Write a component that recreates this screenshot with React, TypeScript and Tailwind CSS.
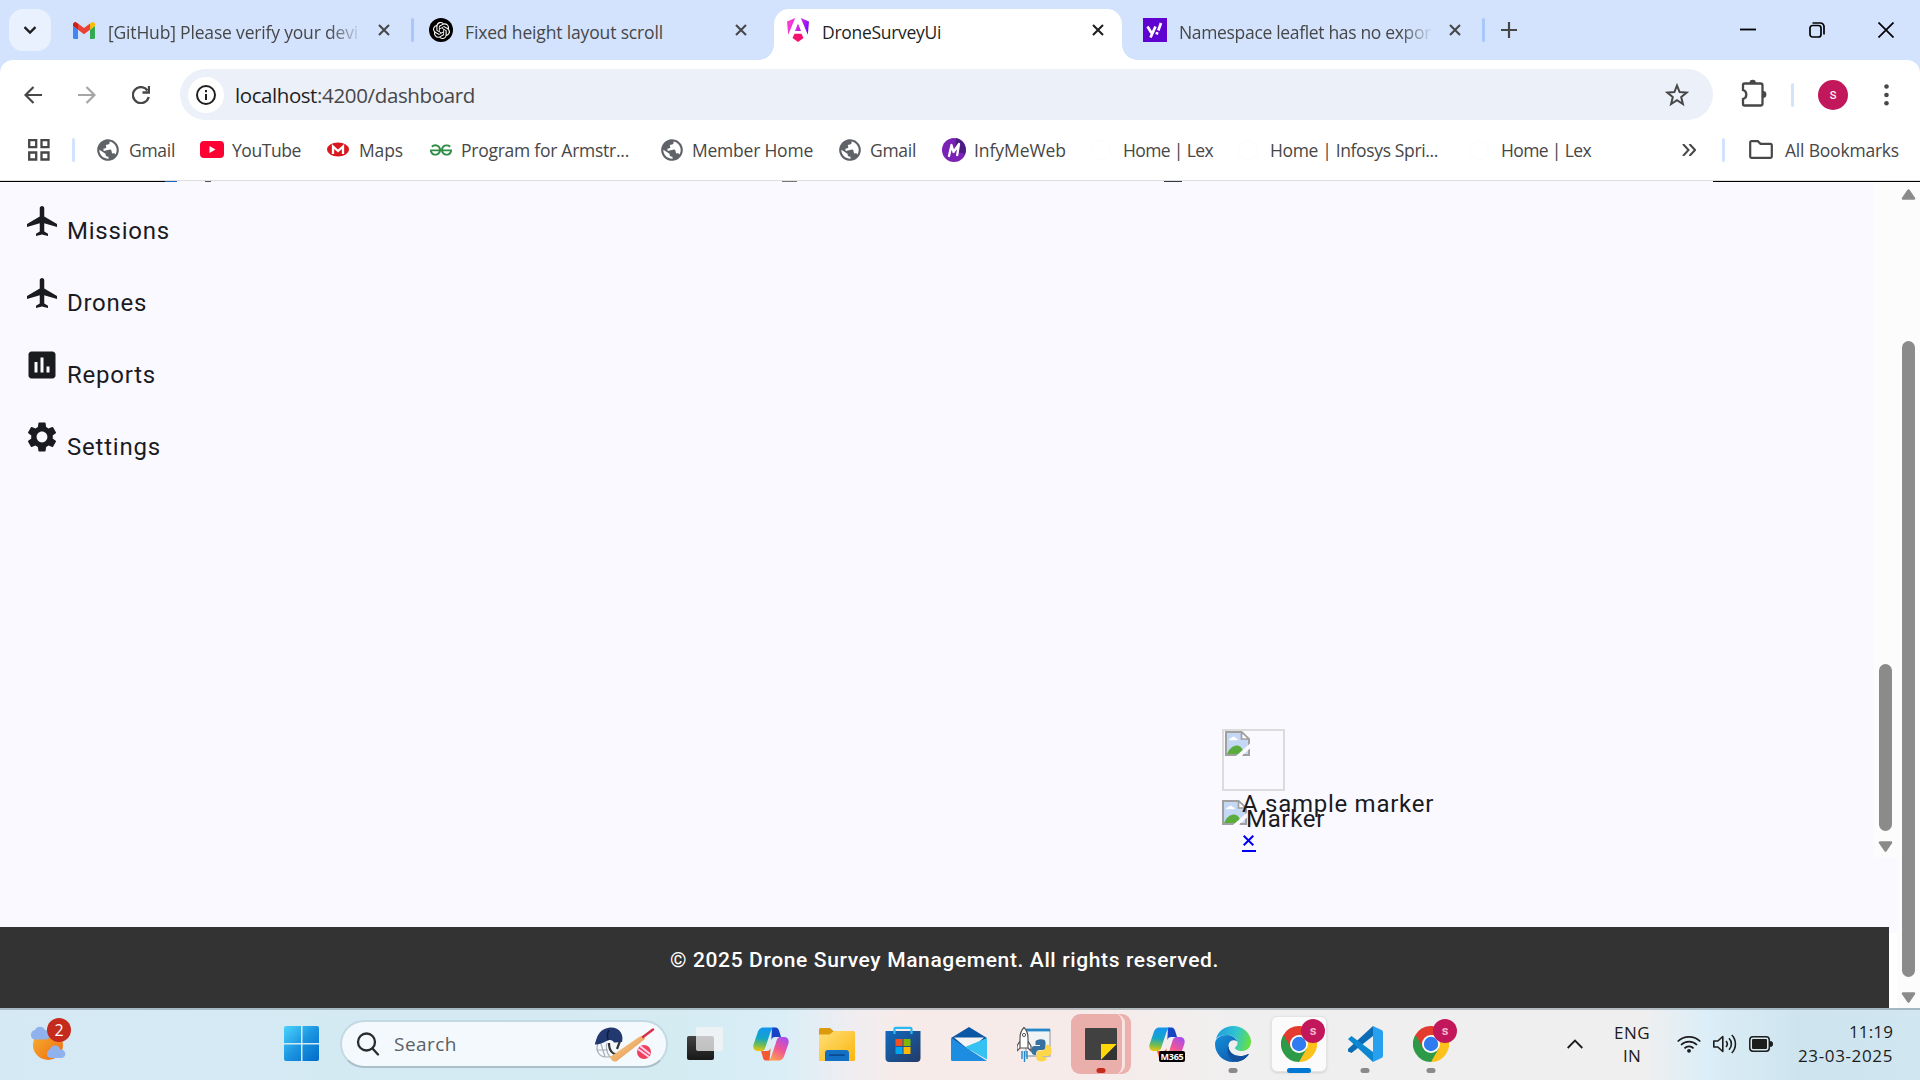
import React, { useLayoutEffect, useRef, useState } from "react";
import { MdPublic, MdAirplanemodeActive, MdSettings, MdAssessment } from "react-icons/md";
import { SiOpenai, SiGeeksforgeeks } from "react-icons/si";

type FitProps = { w: number; className?: string; children: string };

/* Single line of text whose tracking is adjusted so that it spans `w` pixels. */
function Fit({ w, className = "", children }: FitProps) {
  const ref = useRef<HTMLSpanElement>(null);
  const [spacing, setSpacing] = useState(0);
  useLayoutEffect(() => {
    if (ref.current) {
      const natural = ref.current.getBoundingClientRect().width;
      setSpacing((w - natural) / children.length);
    }
  }, [w, children]);
  return (
    <span ref={ref} className={"shrink-0 whitespace-pre " + className} style={{ letterSpacing: spacing + "px" }}>
      {children}
    </span>
  );
}

function Cross({ className = "" }: { className?: string }) {
  return (
    <svg className={"h-3 w-3 shrink-0 " + className} viewBox="0 0 12 12" stroke="currentColor" strokeWidth="2.1" fill="none">
      <path d="M1 1l10 10M11 1L1 11" />
    </svg>
  );
}

function GmailIcon() {
  return (
    <svg className="h-[17px] w-[22px] shrink-0" viewBox="0 0 22 17">
      <path fill="#4285f4" d="M0 4l5 3.7V17H1.5A1.5 1.5 0 0 1 0 15.500z" />
      <path fill="#34a853" d="M22 4l-5 3.700V17h3.500a1.500 1.500 0 0 0 1.500-1.500z" />
      <path fill="#ea4335" d="M5 1.600l6 4.500 6-4.500v6.200l-6 4.500-6-4.500z" />
      <path fill="#c5221f" d="M0 2.500C0 .3 2.400-.8 4.100.900L5 1.600v6.200L0 4z" />
      <path fill="#fbbc04" d="M22 2.500C22 .3 19.600-.8 17.900.900L17 1.600v6.200L22 4z" />
    </svg>
  );
}

function AngularIcon() {
  return (
    <svg className="h-6 w-6 shrink-0" viewBox="0 0 24 24">
      <defs>
        <linearGradient id="ng" x1="0" y1="0.2" x2="1" y2="0.5">
          <stop offset="0" stopColor="#ff41d0" />
          <stop offset="0.5" stopColor="#e02be0" />
          <stop offset="1" stopColor="#7a0cf8" />
        </linearGradient>
      </defs>
      <path fill="url(#ng)" d="M9.200 0L1 3.500l1.200 13.200zM14.800 0L23 3.500l-1.200 13.200zM12 5.500l3 7.500H9z" />
      <path fill="#f6116e" d="M7.500 18l1-2.200h7l1 2.200 1 2L12 24l-5.500-4z" />
    </svg>
  );
}

function TabStrip() {
  const label = "font-['Open_Sans'] text-[17.5px] leading-6 pt-[3px]";
  return (
    <div className="flex h-[60px] shrink-0 items-center bg-[#d3e3fd] text-[#474747]">
      <div className="ml-[9px] flex h-[42px] w-[42px] items-center justify-center rounded-[14px] bg-[#e9f1fe] text-[#1f1f1f]">
        <svg className="h-3 w-3" viewBox="0 0 12 12" fill="none" stroke="currentColor" strokeWidth="2.4"><path d="M.5 3L6 8.500 11.500 3" /></svg>
      </div>
      <div className="ml-[22px] flex w-[338px] items-center">
        <GmailIcon />
        <div className="ml-[13px] flex w-[252px] overflow-hidden [mask-image:linear-gradient(to_right,black_88%,transparent_101%)]">
          <Fit w={250} className={label}>[GitHub] Please verify your devi</Fit>
        </div>
        <Cross className="ml-[18px]" />
      </div>
      <div className="h-6 w-[3px] rounded-full bg-[#a8c7fa]" />
      <div className="ml-[15px] flex w-[345px] items-center">
        <div className="flex h-6 w-6 items-center justify-center rounded-full bg-black text-white"><SiOpenai className="h-[17px] w-[17px]" /></div>
        <Fit w={198} className={label + " ml-3"}>Fixed height layout scroll</Fit>
        <Cross className="ml-[72px]" />
      </div>
      <div className="relative flex h-[51px] w-[348px] items-center self-end rounded-t-[15px] bg-white pb-[9px] text-[#1f1f1f]">
        <div className="absolute bottom-0 -left-[15px] h-[15px] w-[15px] bg-[radial-gradient(circle_at_0_0,#d3e3fd_14.500px,white_15px)]" />
        <div className="absolute -right-[15px] bottom-0 h-[15px] w-[15px] bg-[radial-gradient(circle_at_100%_0,#d3e3fd_14.500px,white_15px)]" />
        <div className="ml-3"><AngularIcon /></div>
        <Fit w={119} className={label + " ml-3"}>DroneSurveyUi</Fit>
        <Cross className="ml-[151px]" />
      </div>
      <div className="ml-[21px] flex w-[339px] items-center">
        <div className="h-6 w-6 shrink-0 bg-[#5f01d1]">
          <svg className="h-6 w-6" viewBox="0 0 24 24" fill="none" stroke="#fff" strokeWidth="2.700"><path d="M4.500 8.500l4 6.500M12.500 8.500L7.500 19.500M18 5l-2.700 7.500M14.300 14.200l-.7 2.300" /></svg>
        </div>
        <div className="ml-3 flex w-[252px] overflow-hidden [mask-image:linear-gradient(to_right,black_88%,transparent_101%)]">
          <Fit w={252} className={label}>Namespace leaflet has no expor</Fit>
        </div>
        <Cross className="ml-[18px]" />
      </div>
      <div className="h-6 w-[3px] rounded-full bg-[#a8c7fa]" />
      <svg className="ml-4 h-4 w-4" viewBox="0 0 16 16" stroke="#474747" strokeWidth="2.200"><path d="M8 0v16M0 8h16" /></svg>
      <div className="mr-[26px] ml-auto flex items-center gap-[53px] text-black">
        <svg className="h-4 w-4" viewBox="0 0 16 16" stroke="currentColor" strokeWidth="1.800"><path d="M0 7.500h16" /></svg>
        <svg className="h-4 w-4" viewBox="0 0 16 16" fill="none" stroke="currentColor" strokeWidth="1.700"><rect x="1" y="3.500" width="11" height="11.500" rx="2.500" /><path d="M3.500 1h8a3.500 3.500 0 0 1 3.500 3.500v8" /></svg>
        <svg className="h-4 w-4" viewBox="0 0 16 16" stroke="currentColor" strokeWidth="1.700"><path d="M.5.5l15 15M15.500.5l-15 15" /></svg>
      </div>
    </div>
  );
}

function Toolbar() {
  return (
    <div className="shrink-0 bg-[#d3e3fd]">
      <div className="flex h-[69px] items-center rounded-t-[13px] bg-white text-[#474747]">
        <svg className="ml-6 h-[18px] w-[18px]" viewBox="0 0 18 18" fill="none" stroke="currentColor" strokeWidth="2.200"><path d="M18 9H2M9.500 1L1.500 9l8 8" /></svg>
        <svg className="ml-9 h-[18px] w-[18px] text-[#a5a5a5]" viewBox="0 0 18 18" fill="none" stroke="currentColor" strokeWidth="2.200"><path d="M0 9h16M8.500 1l8 8-8 8" /></svg>
        <svg className="ml-9 h-[18px] w-[18px]" viewBox="0 0 18 18" fill="none" stroke="currentColor" strokeWidth="2.300"><path d="M15.500 4.500A8 8 0 1 0 16.700 11M17 0v6.500h-6.500" /></svg>
        <div className="ml-[30px] flex h-[51px] w-[1533px] items-center rounded-full bg-[#ecf0f9]">
          <div className="ml-2 flex h-9 w-9 items-center justify-center rounded-full bg-white text-[#1f1f1f]">
            <svg className="h-5 w-5" viewBox="0 0 20 20" fill="none" stroke="currentColor" strokeWidth="2"><circle cx="10" cy="10" r="9" /><path d="M10 9v6M10 5v2.200" /></svg>
          </div>
          <span className="ml-[11px] flex pt-px font-['Open_Sans'] text-[20.5px] leading-7 text-[#474747]">
            <Fit w={82} className="text-[#1f1f1f]">localhost</Fit>
            <Fit w={158}>:4200/dashboard</Fit>
          </span>
          <svg className="mr-6 ml-auto h-6 w-6" viewBox="0 0 24 24" fill="none" stroke="currentColor" strokeWidth="2"><path d="M12 2.500l2.600 6.600 7 .5-5.400 4.500 1.700 6.900L12 17.200 6.100 21l1.700-6.900L2.400 9.600l7-.5z" /></svg>
        </div>
        <svg className="mr-px mb-[3px] ml-[28px] h-[30px] w-[26px]" viewBox="0 0 26 30" fill="none" stroke="currentColor" strokeWidth="2.300"><path d="M3.500 5.500h16a2 2 0 0 1 2 2v18a2 2 0 0 1-2 2h-16a1.500 1.500 0 0 1-1.500-1.500v-5c2-.5 3.300-2.100 3.300-4.500S4 12.500 2 12V7a1.500 1.500 0 0 1 1.500-1.500z" /><path fill="currentColor" stroke="none" d="M8.500 5a3.200 3.200 0 0 1 6.400 0zM22 13a3.200 3.200 0 0 1 0 6.800z" /></svg>
        <div className="ml-[23px] h-6 w-[3px] rounded-full bg-[#d3e3fd]" />
        <div className="ml-6 flex h-[30px] w-[30px] items-center justify-center rounded-full bg-[#c2185b] font-['Roboto'] text-[14px] text-white">s</div>
        <svg className="ml-[36px] h-6 w-[5px]" viewBox="0 0 5 24" fill="currentColor"><circle cx="2.500" cy="3.500" r="2.300" /><circle cx="2.500" cy="12" r="2.300" /><circle cx="2.500" cy="20.300" r="2.300" /></svg>
      </div>
    </div>
  );
}

type Bookmark = { icon: React.ReactNode; slot: string; text: string; w: number };

const globe = <MdPublic className="h-[26px] w-[26px] -rotate-12 text-[#5f6368]" />;
const faint = <div className="h-5 w-5 rounded-full border border-[#fafcfe]" />;

const bookmarks: Bookmark[] = [
  { icon: globe, slot: "w-[34px] ml-[20px]", text: "Gmail", w: 46 },
  {
    icon: <svg className="h-[17px] w-6" viewBox="0 0 24 17"><rect width="24" height="17" rx="4" fill="#ff0033" /><path d="M9.500 5v7l6-3.500z" fill="#fff" /></svg>,
    slot: "w-[32px] ml-[25px]", text: "YouTube", w: 69,
  },
  {
    icon: <svg className="h-[15px] w-[22px]" viewBox="0 0 22 15"><ellipse cx="11" cy="7.500" rx="11" ry="7" fill="#d8171e" /><path d="M6 12V4.500L11 9l5-4.500V12" stroke="#fff" strokeWidth="2.300" fill="none" /></svg>,
    slot: "w-[32px] ml-[26px]", text: "Maps", w: 44,
  },
  { icon: <SiGeeksforgeeks className="h-[22px] w-[22px] text-[#2f8d46]" />, slot: "w-[31px] ml-[27px]", text: "Program for Armstr...", w: 168 },
  { icon: globe, slot: "w-[33px] ml-[30px]", text: "Member Home", w: 121 },
  { icon: globe, slot: "w-[33px] ml-[24px]", text: "Gmail", w: 46 },
  {
    icon: <svg className="h-6 w-6" viewBox="0 0 24 24"><circle cx="12" cy="12" r="12" fill="#7a22b5" /><path d="M14 0a12 12 0 0 1 9 16L13 13z" fill="#4d1a86" /><path d="M7 18L9.500 7l2 7 5.500-8-1.800 11" stroke="#fff" strokeWidth="2.300" fill="none" strokeLinecap="round" strokeLinejoin="round" /></svg>,
    slot: "w-[32px] ml-[26px]", text: "InfyMeWeb", w: 92,
  },
  { icon: faint, slot: "w-[32px] ml-[25px]", text: "Home | Lex", w: 90 },
  { icon: faint, slot: "w-[32px] ml-[25px]", text: "Home | Infosys Spri...", w: 168 },
  { icon: faint, slot: "w-[32px] ml-[31px]", text: "Home | Lex", w: 90 },
];

function BookmarksBar() {
  return (
    <div className="flex h-[52px] shrink-0 items-center border-b border-[#dedede] bg-white pb-[10px] font-['Open_Sans'] text-[17.5px] leading-6 text-[#474747]">
      <svg className="ml-7 h-[22px] w-[22px] shrink-0" viewBox="0 0 22 22" fill="none" stroke="currentColor" strokeWidth="2.300"><path d="M1.200 1.200h7v7h-7zM13.500 1.200h7v7h-7zM1.200 13.500h7v7h-7zM13.500 13.500h7v7h-7z" /></svg>
      <div className="ml-[22px] h-6 w-[3px] shrink-0 rounded-full bg-[#d3e3fd]" />
      {bookmarks.map((b, i) => (
        <div key={i} className="flex shrink-0 items-center">
          <div className={"flex h-7 shrink-0 items-center " + b.slot}>{b.icon}</div>
          <Fit w={b.w}>{b.text}</Fit>
        </div>
      ))}
      <svg className="ml-auto h-3 w-[14px]" viewBox="0 0 14 12" fill="none" stroke="currentColor" strokeWidth="2"><path d="M1 0l5.500 6L1 12M7.500 0L13 6l-5.500 6" /></svg>
      <div className="ml-[26px] h-6 w-[3px] rounded-full bg-[#d3e3fd]" />
      <svg className="ml-6 h-[19px] w-6" viewBox="0 0 24 19" fill="none" stroke="currentColor" strokeWidth="2.200"><path d="M2.500 1.200h6.300l2.700 2.700h10a1.300 1.300 0 0 1 1.300 1.300v11.300a1.300 1.300 0 0 1-1.300 1.300h-19a1.300 1.300 0 0 1-1.300-1.300v-14a1.300 1.300 0 0 1 1.300-1.300z" /></svg>
      <Fit w={114} className="mr-[21px] ml-3">All Bookmarks</Fit>
    </div>
  );
}

const navItems = [
  { icon: MdAirplanemodeActive, text: "Missions", w: 103 },
  { icon: MdAirplanemodeActive, text: "Drones", w: 80 },
  { icon: MdAssessment, text: "Reports", w: 89 },
  { icon: MdSettings, text: "Settings", w: 94 },
];

function BrokenImage({ className = "" }: { className?: string }) {
  return (
    <svg className={"h-[25px] w-[25px] shrink-0 " + className} viewBox="0 0 25 25">
      <path d="M1 1h15.500l7.500 7.500V24H1z" fill="#c4d7f5" stroke="#a0a0a0" strokeWidth="2" />
      <path d="M16.500 1v7H24z" fill="#fff" stroke="#a0a0a0" strokeWidth="1.700" />
      <path d="M4 9.200c0-1.500 1.300-2 2.300-2 .7-2 4-2 4.500 0 1.300 0 2 .7 2 2z" fill="#fff" />
      <path d="M2 23c2-5 6-8.500 9.500-8.500S18 17 19 23z" fill="#5aad3c" />
      <path d="M25 12.500v5L17 25h-6z" fill="#faf9ff" />
      <path d="M18 24h6v-5" fill="none" stroke="#a0a0a0" strokeWidth="2" />
    </svg>
  );
}

function Arrow({ up = false }: { up?: boolean }) {
  return (
    <svg className={"h-[11px] w-[15px] shrink-0 " + (up ? "rotate-180" : "")} viewBox="0 0 15 11">
      <path d="M2 1.500h11L7.500 9.500z" fill="#8b8b8b" stroke="#8b8b8b" strokeWidth="2.500" strokeLinejoin="round" />
    </svg>
  );
}

function Page() {
  return (
    <div className="flex h-[827px] shrink-0 bg-[#faf9ff]">
      <div className="flex w-[1897px] flex-col">
        <div className="flex h-px shrink-0">
          <div className="w-[165px] bg-black" />
          <div className="w-[12px] bg-[#1565c0]" />
          <div className="ml-[28px] w-[6px] bg-[#555]" />
          <div className="ml-[571px] w-[15px] bg-[#777]" />
          <div className="ml-[367px] w-[18px] bg-[#333845]" />
          <div className="ml-auto w-[184px] bg-black" />
        </div>
        <div className="flex h-[676px] shrink-0">
          <nav className="flex w-[300px] flex-col pt-[21px] pl-[23.5px] text-[#1a1b1f]">
            {navItems.map(({ icon: Icon, text, w }) => (
              <div key={text} className="flex h-[72px] items-start">
                <Icon className="h-9 w-9 shrink-0" />
                <Fit w={w} className="mt-[10px] ml-[7.5px] font-['Roboto'] text-[24px] leading-9">{text}</Fit>
              </div>
            ))}
          </nav>
          <div className="relative flex-1 text-[#1a1b1f]">
            <div className="absolute top-[547px] left-[922px] h-[62px] w-[63px] border-2 border-[#dcdcdc]">
              <BrokenImage className="mt-0 ml-px" />
            </div>
            <div className="absolute top-[618px] left-[922px] flex"><BrokenImage /></div>
            <Fit w={79} className="absolute top-[619px] left-[946px] font-['Roboto'] text-[24px] leading-9">Marker</Fit>
            <Fit w={192} className="absolute top-[604px] left-[942px] font-['Roboto'] text-[24px] leading-9">A sample marker</Fit>
            <div className="absolute top-[653px] left-[942px] flex h-[17px] w-[14px] border-b-2 border-[#0000ee]">
              <svg className="ml-px h-[11px] w-[11px]" viewBox="0 0 11 11" stroke="#0000ee" strokeWidth="2"><path d="M.7.7l9.600 9.600M10.300.7L.7 10.300" /></svg>
            </div>
          </div>
          <div className="flex w-[23px] flex-col items-center bg-[#fcfcfc]">
            <div className="mt-[482px] h-[167px] w-[13px] rounded-full bg-[#8b8b8b]" />
            <div className="mt-[10px]"><Arrow /></div>
          </div>
        </div>
        <div className="mt-[69px] flex flex-1 bg-[linear-gradient(#faf9ff_6px,white_6px)]">
          <footer className="flex w-[1889px] justify-center bg-[#333] pt-[18px] text-white">
            <Fit w={549} className="font-['Roboto'] text-[21px] leading-[30px] font-medium">© 2025 Drone Survey Management. All rights reserved.</Fit>
          </footer>
        </div>
      </div>
      <div className="flex w-[23px] flex-col items-center bg-[#fcfcfc]">
        <div className="mb-[7px] h-px w-full shrink-0 bg-black" />
        <Arrow up />
        <div className="mt-[141px] h-[636px] w-[13px] rounded-full bg-[#8b8b8b]" />
        <div className="mt-[15px]"><Arrow /></div>
      </div>
    </div>
  );
}

function Copilot({ id }: { id: string }) {
  return (
    <svg className="h-9 w-9" viewBox="0 0 36 36">
      <defs>
        <linearGradient id={id + "a"} x1="0.400" y1="0" x2="0.300" y2="1"><stop offset="0" stopColor="#1496f0" /><stop offset="0.450" stopColor="#14a5c8" /><stop offset="0.750" stopColor="#72bd50" /><stop offset="1" stopColor="#f0c40c" /></linearGradient>
        <linearGradient id={id + "b"} x1="0.800" y1="0" x2="0.300" y2="1"><stop offset="0" stopColor="#a84df0" /><stop offset="0.500" stopColor="#ee5598" /><stop offset="1" stopColor="#ff9a50" /></linearGradient>
      </defs>
      <path d="M19 1.500h3c3 0 3.500 1.500 4.500 4.500l1.500 5h-6c-2 0-3 1-3.700 3z" fill="#1743c5" />
      <path d="M16.500 34.500h-3c-3 0-3.500-2-4-4.500L8 25h6c2 0 3-1 3.700-3z" fill="#f35a33" />
      <path d="M11 1.500h10c-2.500 1-3 3-4 6l-4 12c-1.200 4-2 5.500-5 5.500H5c-4 0-5.500-3-4.300-7L4.500 7C5.800 3 7.500 1.500 11 1.500z" fill={"url(#" + id + "a)"} />
      <path d="M25 34.500H15c2.500-1 3-3 4-6l4-12c1.200-4 2-5.500 5-5.500h3c4 0 5.500 3 4.300 7L31.500 29c-1.300 4-3 5.500-6.500 5.500z" fill={"url(#" + id + "b)"} />
    </svg>
  );
}

function ChromeLogo() {
  return (
    <div className="relative h-9 w-9">
      <svg className="h-9 w-9" viewBox="0 0 36 36">
        <path d="M18 18L2.400 9A18 18 0 0 1 33.600 9z" fill="#e33b2e" />
        <path d="M18 18L33.600 9A18 18 0 0 1 18 36z" fill="#fcc21b" />
        <path d="M18 18L18 36A18 18 0 0 1 2.400 9z" fill="#2d9a48" />
        <path d="M18 9h15.600l-6 10z" fill="#fcc21b" />
        <path d="M25.800 22.500L18 36l-6-12z" fill="#2d9a48" />
        <path d="M2.400 9l7.800 13.500L16 9z" fill="#e33b2e" />
        <path d="M2.400 9l7.800 13.500 4 3L6 30A18 18 0 0 1 2.400 9z" fill="#2d9a48" />
        <circle cx="18" cy="18" r="9" fill="#fff" />
        <circle cx="18" cy="18" r="7.200" fill="#2f7cf0" />
      </svg>
      <div className="absolute -top-[7px] -right-[8px] flex h-6 w-6 items-center justify-center rounded-full bg-[#c2185b] pb-px font-['Roboto'] text-[13px] font-bold text-[#f3b6cf]">s</div>
    </div>
  );
}

function Indicator({ className }: { className: string }) {
  return <div className={"absolute bottom-[6px] left-1/2 h-[5px] -translate-x-1/2 rounded-full " + className} />;
}

function Cell({ children }: { children: React.ReactNode }) {
  return <div className="relative flex h-[70px] w-[66px] shrink-0 items-center justify-center">{children}</div>;
}

function Weather() {
  return (
    <div className="relative ml-[30px] h-11 w-10 shrink-0">
      <svg className="h-11 w-10" viewBox="0 0 40 44">
        <defs><linearGradient id="sun" x1="0" x2="1" y2="1"><stop offset="0" stopColor="#f6b330" /><stop offset="1" stopColor="#ef6a12" /></linearGradient></defs>
        <circle cx="18" cy="27" r="15" fill="url(#sun)" />
        <path d="M4 21.500a5 5 0 0 1 1-9.500 5.500 5.500 0 0 1 10 0c6 0 6 9.500 1 9.500z" fill="#8fb2ee" />
        <path d="M20 40a4.500 4.500 0 0 1 0-8.500c1-5 9-5.500 10 0 7 0 7 8.500 1 8.500z" fill="#8fb2ee" />
      </svg>
      <div className="absolute top-0 left-[17px] flex h-6 w-6 items-center justify-center rounded-full bg-[#c42b1c] font-['Open_Sans'] text-[16px] text-white">2</div>
    </div>
  );
}

function SearchArt() {
  return (
    <svg className="h-9 w-[60px]" viewBox="0 0 60 36">
      <defs><linearGradient id="bat" x1="0" x2="1" y2="1"><stop offset="0" stopColor="#ffd9a0" /><stop offset="1" stopColor="#e08a3c" /></linearGradient></defs>
      <path d="M3 18c-3 6 1 13 8 13h8M2 24h11M6 18l4 13M12 17c-2 6 0 10 3 14" stroke="#a9adb3" strokeWidth="1.200" fill="none" />
      <path d="M14 17c0 8 4 12 9 11M25 15l-3 8" stroke="#333" strokeWidth="2.200" fill="none" />
      <path d="M0 17.500C2 13 2.500 3 15 1.500 25 1 29 9 27 16c-3 0-5 .5-8 .5-2-2.500-3.500-3-6-2C9 16 6 18.500 0 18.500z" fill="#22396f" />
      <path d="M14 4c-2 3-2 6-1 10" stroke="#0f1c40" strokeWidth="1.500" fill="none" />
      <path d="M15 31L44 11l5-2 1 4-5 4-23 18c-3 1.500-6-.5-7-4z" fill="url(#bat)" />
      <path d="M48 11l10-7.500" stroke="#d92e49" strokeWidth="2.500" strokeLinecap="round" />
      <circle cx="49" cy="26" r="7" fill="#f0415c" />
      <path d="M43 23l11 8M45 20l10 8" stroke="#ffd0ee" strokeWidth="2" />
    </svg>
  );
}

function Taskbar() {
  return (
    <div className="flex h-[72px] shrink-0 items-center border-t-2 border-[#788a93]/50 bg-[linear-gradient(to_right,#d4e9f4_0,#d4ebf2_670px,#d9eef7_780px,#efedf1_850px,#f7ebea_900px,#f7ebea_1070px,#f0efef_1230px,#f0efef_1640px,#dceef7_1705px,#cde4ee_1800px,#d0e6f0_1920px)] pb-[2px]">
      <div className="flex w-[284px] shrink-0 self-start pt-[8px]"><Weather /></div>
      <svg className="h-9 w-9 shrink-0" viewBox="0 0 36 36">
        <defs><linearGradient id="win" x1="0" y1="0" x2="36" y2="36" gradientUnits="userSpaceOnUse"><stop offset="0" stopColor="#4cd3fb" /><stop offset="0.500" stopColor="#1a93e0" /><stop offset="1" stopColor="#0069c8" /></linearGradient></defs>
        <path d="M2 0h15v17H0V2a2 2 0 0 1 2-2zM18.500 0H33a2 2 0 0 1 2 2v15H18.500zM0 18.500h17V35H2a2 2 0 0 1-2-2zM18.500 18.500H35V33a2 2 0 0 1-2 2H18.500z" fill="url(#win)" />
      </svg>
      <div className="ml-[20px] flex h-[48px] w-[328px] shrink-0 items-center rounded-full border-2 border-[#c3d9e3] border-b-[#aabfc9] bg-[#f3f9fd]">
        <svg className="ml-[14px] h-6 w-6" viewBox="0 0 24 24" fill="none" stroke="#2b2b2b" strokeWidth="2.300" strokeLinecap="round"><circle cx="10.500" cy="10" r="8.500" /><path d="M16.500 16.500l5.500 6" /></svg>
        <Fit w={63} className="ml-[14px] font-['Open_Sans'] text-[19px] leading-7 text-[#5c6064]">Search</Fit>
        <div className="mr-[11px] ml-auto"><SearchArt /></div>
      </div>
      <div className="ml-[4px] flex">
        <Cell>
          <div className="relative h-9 w-9">
            <div className="absolute top-[10px] left-0 h-6 w-[27px] rounded-[2px] bg-gradient-to-b from-[#444] to-[#181818]" />
            <div className="absolute top-[1px] left-[9px] h-6 w-[27px] rounded-[2px] bg-[#f4f4f4]/75" />
          </div>
        </Cell>
        <Cell><Copilot id="cp" /></Cell>
        <Cell>
          <svg className="h-9 w-9" viewBox="0 0 36 36">
            <defs><linearGradient id="fold" x1="0" x2="1" y2="1"><stop offset="0" stopColor="#ffe07a" /><stop offset="1" stopColor="#fbb50c" /></linearGradient></defs>
            <path d="M0 3.500a1.500 1.500 0 0 1 1.500-1.500H11l4 3.500L11 10H0z" fill="#dd9a0c" />
            <path d="M0 8.500h10.500L15 5h19.500A1.500 1.500 0 0 1 36 6.500v27a1.500 1.500 0 0 1-1.500 1.500h-33A1.500 1.500 0 0 1 0 33.500z" fill="url(#fold)" />
            <path d="M6 35V27a3 3 0 0 1 3-3h18a3 3 0 0 1 3 3v8z" fill="#1271c4" /><path d="M11 29.200h14" stroke="#0b4a8c" strokeWidth="1.800" strokeLinecap="round" />
          </svg>
        </Cell>
        <Cell>
          <svg className="h-9 w-9" viewBox="0 0 36 36">
            <defs><linearGradient id="store" x1="0" x2="1" y2="1"><stop offset="0" stopColor="#0f6abf" /><stop offset="1" stopColor="#243a66" /></linearGradient></defs>
            <path d="M.5 5h35v27a4 4 0 0 1-4 4h-27a4 4 0 0 1-4-4z" fill="url(#store)" />
            <path d="M9.500 8V3a1.200 1.200 0 0 1 1.200-1.200h14.600A1.200 1.200 0 0 1 26.500 3v5" stroke="#2cb8f2" strokeWidth="2.200" fill="none" />
            <path fill="#f25022" d="M10.500 13h7v7h-7z" /><path fill="#7fba00" d="M18.500 13h7v7h-7z" /><path fill="#00a4ef" d="M10.500 21h7v7h-7z" /><path fill="#ffb900" d="M18.500 21h7v7h-7z" />
          </svg>
        </Cell>
        <Cell>
          <svg className="h-9 w-9" viewBox="0 0 36 36">
            <path d="M0 12L18 1l18 11-18 13z" fill="#0a57a5" />
            <path d="M3 11.500h30L18 24z" fill="#f3f3f3" />
            <path d="M36 12v21.500L14 21z" fill="#35c1f2" />
            <path d="M0 12l36 23H1.500A1.500 1.500 0 0 1 0 33.500z" fill="#1c8de0" />
          </svg>
        </Cell>
        <Cell>
          <svg className="h-9 w-9" viewBox="0 0 36 36">
            <path d="M9 4h24v26H9z" fill="#f1f3f5" stroke="#a3acb4" strokeWidth="1.300" /><path d="M9 4h24" stroke="#2487c8" strokeWidth="2.800" />
            <path d="M7 1.500C3.500 5 3 8 3 12v10h8V12c0-4-.5-7-4-10.500zM3 15l-3 5v5l3-3M11 15l3 5v5l-3-3" fill="#fff" stroke="#555" strokeWidth="1.200" /><circle cx="7" cy="9" r="1.600" fill="none" stroke="#555" />
            <path d="M5 25v8M7.500 25v11M10 25v8" stroke="#2487c8" strokeWidth="1.400" />
            <path d="M18.500 16c0-3 10-4 10 0v5c0 3-2 3-5 3s-4.500 1-4.500 5c-6 1-6-9-2-9h6v-1h-4.500z" fill="#36719f" />
            <path d="M28.500 19c7-2 8 10 3 11h-6v1h4v2c0 3-10 3.500-10 0v-5c0-3 1.500-3.500 5-3.500s4-1.500 4-5.500z" fill="#fed64a" />
          </svg>
        </Cell>
        <Cell>
          <div className="absolute top-[5px] left-[10px] h-[60px] w-[53px] rounded-[9px] bg-[#ebb1ae]" />
          <div className="absolute top-[5px] left-[3px] box-content h-[60px] w-[51px] rounded-[9px] border-r-[3px] border-[#f8e4e3] bg-[#eaaeab]" />
          <div className="relative h-8 w-8 rounded-[1px] bg-[#414141]">
            <svg className="absolute right-0 bottom-0 h-4 w-4" viewBox="0 0 16 16"><path d="M0 0h16L0 16z" fill="#ffd60a" /><path d="M16 0v16H0z" fill="#333" /></svg>
          </div>
          <Indicator className="w-[9px] bg-[#c42b1c]" />
        </Cell>
        <Cell>
          <div className="relative">
            <Copilot id="m3" />
            <div className="absolute right-0 bottom-0 flex h-[11px] w-[26px] items-center justify-center rounded-[2px] bg-black font-['Open_Sans'] text-[9px] font-bold text-white"><Fit w={23}>M365</Fit></div>
          </div>
        </Cell>
        <Cell>
          <svg className="h-9 w-9" viewBox="0 0 36 36">
            <defs>
              <linearGradient id="e1" x1="0" x2="1" y1="0.300" y2="0.500"><stop offset="0" stopColor="#1f9ee0" /><stop offset="0.550" stopColor="#30c4d0" /><stop offset="1" stopColor="#66e043" /></linearGradient>
              <linearGradient id="e2" x1="0" x2="1" y2="1"><stop offset="0" stopColor="#1591dc" /><stop offset="1" stopColor="#0b4c9e" /></linearGradient>
            </defs>
            <path d="M1 13C3 5 10 0 18 0c10 0 18 7.500 18 15.500 0 6-4 9.500-9 9.500-4 0-7-1.500-7-3 0-1 2.500-2 2.500-5 0-5-5-8-10.500-8C7 9 3 10.500 1 13z" fill="url(#e1)" />
            <path d="M0 18C0 12 6 9 12 9c5.500 0 9 3 10.300 6.500C17 12 13.500 16 13.500 20c0 6 6 12 16 9.500 2-.5 3.500-1.500 4.500-1.500C31 33 25 36 18 36 8 36 0 28 0 18z" fill="url(#e2)" />
            <path d="M13.500 20c-3 5 1 15 8 15.800C28 35 32 31.500 34 28c-1 0-2.500 1-4.500 1.500-10 2.500-16-3.500-16-9.500z" fill="#12509d" />
          </svg>
          <Indicator className="w-[9px] bg-[#8a8a8a]" />
        </Cell>
        <Cell>
          <div className="absolute top-[7px] left-[5px] h-[56px] w-[56px] rounded-[6px] border border-[#e4e4e4] bg-[#fbfbfb] shadow-sm" />
          <ChromeLogo />
          <Indicator className="w-6 bg-[#0078d4]" />
        </Cell>
        <Cell>
          <svg className="h-9 w-9" viewBox="0 0 36 36">
            <path d="M1 23L26 0v10L4.500 27 1 25.500z" fill="#0b6cb5" />
            <path d="M1 13l3.500-3L26 26v10L1 13z" fill="#0d87d0" />
            <path d="M26 0l8.500 4A2.500 2.500 0 0 1 36 6v24a2.500 2.500 0 0 1-1.500 2L26 36z" fill="#27a0ee" />
          </svg>
          <Indicator className="w-[9px] bg-[#8a8a8a]" />
        </Cell>
        <Cell>
          <ChromeLogo />
          <Indicator className="w-[9px] bg-[#8a8a8a]" />
        </Cell>
      </div>
      <div className="mr-px ml-auto flex shrink-0 items-center text-[#1c1c1c]">
        <svg className="h-[10px] w-4" viewBox="0 0 16 10" fill="none" stroke="currentColor" strokeWidth="1.800"><path d="M.7 9L8 1.500 15.300 9" /></svg>
        <div className="ml-[31px] flex w-9 flex-col items-center font-['Open_Sans'] text-[17px] leading-[23px]">
          <Fit w={36}>ENG</Fit>
          <Fit w={18}>IN</Fit>
        </div>
        <svg className="ml-[27px] h-[18px] w-6" viewBox="0 0 24 18" fill="none" stroke="currentColor" strokeWidth="1.700"><path d="M.7 6.500a16 16 0 0 1 22.600 0M4 10a11.300 11.300 0 0 1 16 0M7.400 13.300a6.500 6.500 0 0 1 9.200 0" /><circle cx="12" cy="15.800" r="1.900" fill="currentColor" stroke="none" /></svg>
        <svg className="ml-3 h-5 w-6" viewBox="0 0 24 20" fill="none" stroke="currentColor" strokeWidth="1.600" strokeLinejoin="round"><path d="M.8 7v6h4l5 4.500v-15L4.800 7zM13 7a4.500 4.500 0 0 1 0 6M16 4.300a8 8 0 0 1 0 11.400M18.800 1a13 13 0 0 1 0 18" /></svg>
        <svg className="ml-3 h-4 w-6" viewBox="0 0 24 16"><rect x=".8" y=".8" width="19.500" height="14.400" rx="3.200" fill="none" stroke="currentColor" strokeWidth="1.500" /><rect x="3" y="3" width="15" height="10" rx="1" fill="currentColor" /><path d="M21.500 5.500c3 0 3 5 0 5z" fill="currentColor" stroke="currentColor" /></svg>
        <div className="mr-[26px] ml-[25px] flex w-[95px] flex-col items-end pb-px font-['Open_Sans'] text-[17px] leading-6">
          <Fit w={44}>11:19</Fit>
          <Fit w={95}>23-03-2025</Fit>
        </div>
      </div>
    </div>
  );
}

export default function App() {
  return (
    <div className="flex h-[1080px] w-[1920px] flex-col overflow-hidden bg-white">
      <TabStrip />
      <Toolbar />
      <BookmarksBar />
      <Page />
      <Taskbar />
    </div>
  );
}
